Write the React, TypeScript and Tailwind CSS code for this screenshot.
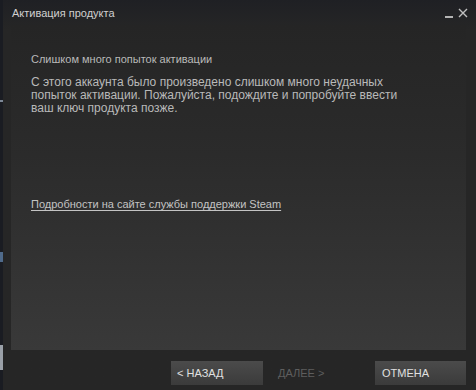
import React from 'react';

export default function App() {
  return (
    <div className="w-[476px] h-[390px] flex bg-[#262626] overflow-hidden" style={{ fontFamily: '"Liberation Sans", Arial, sans-serif' }}>
      {/* desktop edge */}
      <div className="w-[3px] h-full bg-[#1a1c22] flex flex-col">
        <div className="h-[100px]" />
        <div className="h-[2px] bg-[#7c8796]" />
        <div className="h-[150px]" />
        <div className="h-[10px] bg-[#4f6a8a]" />
        <div className="flex-1" />
        <div className="h-[25px] bg-[#9aa0a8]" />
        <div className="h-[20px]" />
      </div>

      <div className="flex-1 flex flex-col bg-gradient-to-b from-[#1f2024] to-[#262626] to-[30px]">
        {/* title bar */}
        <div className="h-[25px] flex items-center justify-between pl-[9px] pr-[8px]">
          <span className="text-[11px] text-[#d0d0d0] pt-[1px]">Активация продукта</span>
          <div className="flex items-center gap-[5px] text-[#b4b4b4]">
            <div className="w-[8px] h-[2px] bg-[#b4b4b4] mt-[8px]" />
            <svg width="10" height="10" viewBox="0 0 10 10" className="mt-[1px]">
              <path d="M1 1L9 9M9 1L1 9" stroke="#c0c0c0" strokeWidth="1.4" />
            </svg>
          </div>
        </div>

        {/* content panel */}
        <div className="ml-[8px] mr-[10px] h-[325px] bg-gradient-to-b from-[#252525] via-[#2b2b2b] via-40% to-[#393939] px-[20px] pt-[28px] text-[12px] leading-[13px] text-[#b9b9b9]">
          <p className="text-[11px]">Слишком много попыток активации</p>
          <p className="mt-[10px] w-[380px]">
            С этого аккаунта было произведено слишком много неудачных попыток активации. Пожалуйста, подождите и попробуйте ввести ваш ключ продукта позже.
          </p>
          <a className="block mt-[83px] text-[11px] underline underline-offset-[2px] text-[#c3c3c3]">Подробности на сайте службы поддержки Steam</a>
        </div>

        {/* bottom buttons */}
        <div className="flex items-center pl-[168px] pr-[10px] pt-[11px]">
          <button className="w-[92px] h-[24px] bg-gradient-to-b from-[#4b4b4b] to-[#3b3b3b] text-left pl-[6px] text-[11px] text-[#e0e0e0]">&lt; НАЗАД</button>
          <span className="ml-[15px] text-[11px] text-[#5e5e5e]">ДАЛЕЕ &gt;</span>
          <div className="flex-1" />
          <button className="w-[91px] h-[24px] bg-gradient-to-b from-[#4b4b4b] to-[#3b3b3b] text-left pl-[7px] text-[11px] text-[#e0e0e0]">ОТМЕНА</button>
        </div>
      </div>
    </div>
  );
}
